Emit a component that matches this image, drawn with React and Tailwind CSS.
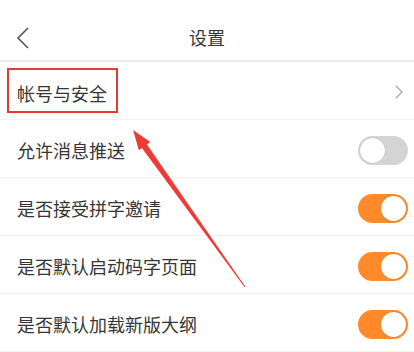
import React from "react";

const Toggle = ({ on }) => (
  <div
    className={`w-[50px] h-[29px] rounded-full p-[2px] flex items-center ${
      on ? "bg-[#ff8a2b] justify-end" : "bg-[#d4d4d4] justify-start"
    }`}
  >
    <div className="w-[25px] h-[25px] rounded-full bg-white shadow-[0_0_1px_rgba(0,0,0,0.3)]" />
  </div>
);

const rows = [
  { label: "允许消息推送", on: false },
  { label: "是否接受拼字邀请", on: true },
  { label: "是否默认启动码字页面", on: true },
  { label: "是否默认加载新版大纲", on: true },
];

export default function App() {
  return (
    <div
      className="relative w-[414px] h-[352px] overflow-hidden bg-white text-[#363636]"
      style={{ fontFamily: '"Noto Sans CJK SC", "Noto Sans", sans-serif' }}
    >
      {/* header */}
      <div className="relative h-[62px] flex items-center justify-center border-b-2 border-[#ececec]">
        <svg className="absolute left-[15px] top-[26px]" width="16" height="24" viewBox="0 0 16 24">
          <path d="M13 2 L3 12 L13 22" fill="none" stroke="#555" strokeWidth="1.6" />
        </svg>
        <span className="text-[18px] mt-[15px]">设置</span>
      </div>

      {/* account row */}
      <div className="h-[58px] flex items-center justify-between pl-[17px] pr-[10px] border-b border-[#f0f0f0]">
        <span className="text-[18px] mt-[6px]">帐号与安全</span>
        <svg width="10" height="16" viewBox="0 0 10 16" className="mt-[2px]">
          <path d="M2 2 L8 8 L2 14" fill="none" stroke="#aaa" strokeWidth="1.4" />
        </svg>
      </div>

      {rows.map((r, i) => (
        <div
          key={i}
          className="h-[58px] flex items-center justify-between pl-[17px] pr-[6px] border-b border-[#f2f2f2]"
        >
          <span className="text-[18px] mt-[4px]">{r.label}</span>
          <div className="mt-[3px]">
            <Toggle on={r.on} />
          </div>
        </div>
      ))}

      {/* red highlight box */}
      <div className="absolute left-[7px] top-[68px] w-[111px] h-[45px] border-2 border-[#e53935]" />

      {/* red arrow */}
      <svg className="absolute left-0 top-0" width="414" height="352" viewBox="0 0 414 352">
        <polygon points="144.5,141 139.5,144.8 244.6,287.3 245.4,286.7" fill="#ee3b36" />
        <polygon points="133,130 150.3,142.1 138.9,150.3" fill="#ee3b36" />
      </svg>
    </div>
  );
}
